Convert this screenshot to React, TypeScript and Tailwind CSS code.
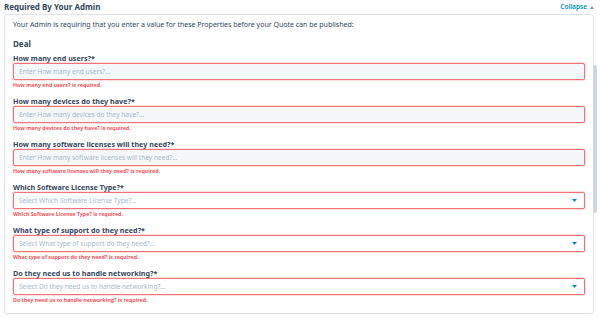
const fields = [
  { label: "How many end users?", kind: "input" },
  { label: "How many devices do they have?", kind: "input" },
  { label: "How many software licenses will they need?", kind: "input" },
  { label: "Which Software License Type?", kind: "select" },
  { label: "What type of support do they need?", kind: "select" },
  { label: "Do they need us to handle networking?", kind: "select" },
];

function Caret() {
  return (
    <svg width="5" height="3" viewBox="0 0 5 3" className="shrink-0">
      <path d="M0 0 H5 L2.5 3 Z" fill="#0091ae" />
    </svg>
  );
}

function Field({ label, kind }: { label: string; kind: string }) {
  const isSelect = kind === "select";
  return (
    <div className="mb-[8px]">
      <div className="text-[7.2px] leading-[8px] font-bold text-[#33475b]">{label}*</div>
      <div
        className={`mt-[1px] h-[17px] flex items-center justify-between px-[5px] border border-[#f2727a] rounded-[2px] shadow-[0_0_0_1px_rgba(242,84,91,0.18)] ${
          isSelect ? "bg-white" : "bg-[#f5f8fa]"
        }`}
      >
        <span className="text-[6.6px] text-[#a8b9cb]">
          {isSelect ? "Select" : "Enter"} {label}...
        </span>
        {isSelect && (
          <span className="mr-[2px]">
            <Caret />
          </span>
        )}
      </div>
      <div className="mt-[1px] text-[5.3px] leading-[8px] font-bold text-[#f2545b]">
        {label} is required.
      </div>
    </div>
  );
}

export default function App() {
  return (
    <div
      className="relative w-[600px] h-[319px] overflow-hidden bg-white text-[#33475b]"
      style={{ fontFamily: '"Noto Sans", "Open Sans", sans-serif' }}
    >
      <div className="flex items-center justify-between h-[14px] pl-[4px] pr-[6px]">
        <span className="text-[8px] font-bold">Required By Your Admin</span>
        <span className="flex items-center gap-[3px] text-[6.5px] font-semibold text-[#0091ae]">
          Collapse
          <svg width="4" height="3" viewBox="0 0 4 3">
            <path d="M0 3 H4 L2 0 Z" fill="#7c98b6" />
          </svg>
        </span>
      </div>

      <div className="ml-[4px] mr-[6px] border border-[#dfe3eb] rounded-[3px] px-[8px] pt-[6px] pb-[1px]">
        <div className="text-[7px] leading-[8px]">
          Your Admin is requiring that you enter a value for these Properties before your Quote can be
          published:
        </div>
        <div className="mt-[10px] text-[8px] leading-[10px] font-bold">Deal</div>
        <div className="mt-[5px]">
          {fields.map((f) => (
            <Field key={f.label} label={f.label} kind={f.kind} />
          ))}
        </div>
      </div>

      <div className="absolute left-[593px] top-[65px] w-[4px] h-[148px] rounded-full bg-[#cbd6e2]" />
    </div>
  );
}
